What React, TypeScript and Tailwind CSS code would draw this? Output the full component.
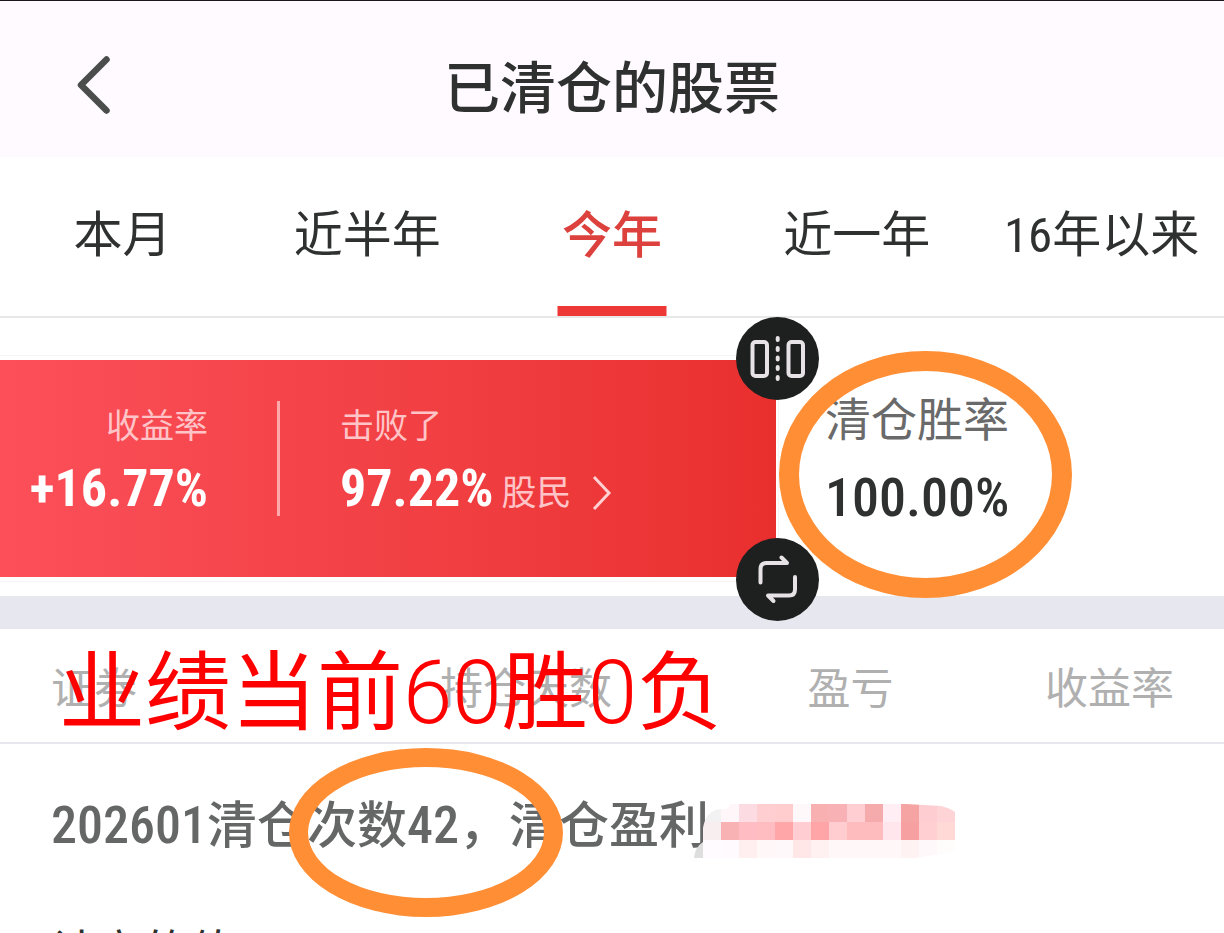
const periods = ['本月', '近半年', '今年', '近一年', '16年以来'];

const mosaicColors = [
  ['#f3f2f3', '#fff6f9', '#fddbe3', '#ffced1', '#ffcdce', '#fff8fa', '#f8b0b1', '#f8b1b4', '#ffced2', '#f5abab', '#ffeef3', '#f5a3a3', '#fecdd1', '#ffd4d6'],
  ['#f8eef0', '#f8b2b3', '#ffbcc2', '#ffbdc1', '#fea6a8', '#ffcdd2', '#ffa5a7', '#ffccd0', '#ffbcbe', '#ffbcbe', '#ffe6ec', '#f7a0a1', '#ffcfd2', '#fed9d6'],
  ['#fffbff', '#fffafd', '#ffefef', '#fff7f8', '#fff8fb', '#ffe7e8', '#fff0f2', '#fff7f8', '#fff7f8', '#fff7f8', '#fff7f8', '#fff2f3', '#fff8fa', '#fffcfc'],
];

function BackIcon() {
  return (
    <svg width="40" height="64" viewBox="0 0 40 64" fill="none" stroke="#4a4d4b" strokeWidth="6.500" strokeLinecap="round" strokeLinejoin="round" aria-hidden="true">
      <path d="M34.500 7.500 9 33l25.500 25.500" />
    </svg>
  );
}

function FlipIcon() {
  return (
    <svg width="83" height="83" viewBox="0 0 83 83" fill="none" stroke="#e6e2e5" strokeWidth="4" aria-hidden="true">
      <rect x="16.5" y="25" width="14.5" height="34" rx="3" />
      <rect x="52.5" y="25" width="14.5" height="34" rx="3" />
      <path d="M41.7 21v2M41.7 31v2M41.7 40.5v2M41.7 50v2M41.7 60v2" strokeLinecap="round" />
    </svg>
  );
}

function RotateIcon() {
  return (
    <svg width="83" height="83" viewBox="0 0 83 83" fill="none" stroke="#e6e2e5" strokeWidth="4" strokeLinecap="round" strokeLinejoin="round" aria-hidden="true">
      <path d="M24.5 44.500V31q0-6 6-6H51L45.500 19.500" />
      <path d="M59 39V51.500q0 6-6 6H32L37.500 63" />
    </svg>
  );
}

function Mosaic() {
  return (
    <svg className="-ml-[15px] mt-[11px] shrink-0" width="261" height="54" viewBox="0 0 261 54" aria-hidden="true">
      <defs>
        <clipPath id="smear">
          <path d="M9 54V38Q8 32 9 24 12 6 27 5 34 7 36 0H212L247 2Q256 4 261 8V47Q240 52 220 54Z" />
        </clipPath>
      </defs>
      <path d="M0 54Q1 43 9 38V54Z" fill="#dedede" />
      <g clipPath="url(#smear)" shapeRendering="crispEdges">
        {mosaicColors.map((row, y) =>
          row.map((color, x) => <rect key={`${x}-${y}`} x={9 + x * 18} y={y * 18} width="18" height="18" fill={color} />),
        )}
      </g>
    </svg>
  );
}

export default function App() {
  return (
    <div className="h-screen overflow-hidden bg-white font-['Roboto_Condensed','Noto_Sans_CJK_SC',sans-serif] text-[#2f3130]">
      <header className="relative flex h-[157px] items-center justify-center border-t border-[#1c161c] bg-[#fefaff] pb-3 pt-8">
        <button type="button" aria-label="返回" className="absolute left-[72px] top-[51px]">
          <BackIcon />
        </button>
        <h1 className="text-[56px] font-medium leading-none">已清仓的股票</h1>
      </header>

      <nav className="grid h-[161px] grid-cols-5 border-b-2 border-[#e8e8e9]">
        {periods.map((label) =>
          label === '今年' ? (
            <button key={label} type="button" aria-current="true" className="relative pb-[2px] text-[50px] font-medium leading-none text-[#dc413d]">
              {label}
              <span className="absolute bottom-0 left-1/2 h-[10px] w-[109px] -translate-x-1/2 bg-[#ee3835]" />
            </button>
          ) : (
            <button key={label} type="button" className="whitespace-nowrap pb-[2px] text-[49px] leading-none">
              {label}
            </button>
          ),
        )}
      </nav>

      <section className="flex h-[278px] pt-[37px]">
        <div className="relative h-[227px] w-[779px] shrink-0 border-y border-r border-[#f8f3f6] py-1 pr-[2px]">
          <a href="#rank" className="flex h-[217px] bg-linear-to-r from-[#fc4f59] via-[#f24145] to-[#e92f2e] text-white">
            <div className="flex w-[208px] flex-col items-end pt-[48px]">
              <span className="text-[34px] leading-[36px] text-[#ffc4c7]">收益率</span>
              <span className="mt-[14px] text-[52px] font-bold leading-[62px]">+16.77%</span>
            </div>
            <div className="ml-[69px] mt-[41px] h-[115px] w-[3px] bg-[#ffa9ac]" />
            <div className="ml-[60px] pt-[48px]">
              <div className="text-[34px] leading-[36px] text-[#ffc4c7]">击败了</div>
              <div className="mt-[14px] flex items-center text-[52px] font-bold leading-[62px]">
                97.22%
                <span className="ml-[8px] pt-[8px] text-[35px] font-normal leading-none text-[#ffc4c7]">股民</span>
                <svg className="ml-[21px] mt-[8px]" width="20" height="36" viewBox="0 0 20 36" fill="none" stroke="#ffd0d2" strokeWidth="3" aria-hidden="true">
                  <path d="m2 2 15 16L2 34" />
                </svg>
              </div>
            </div>
          </a>
          <button type="button" aria-label="镜像" className="absolute -right-[41px] -top-[39px] z-10 size-[83px] rounded-full bg-[#1e1f1f]">
            <FlipIcon />
          </button>
          <button type="button" aria-label="旋转" className="absolute -bottom-[40px] -right-[41px] z-10 size-[83px] rounded-full bg-[#1e1f1f]">
            <RotateIcon />
          </button>
        </div>
        <div className="relative pl-[46px] pt-[40px]">
          <div className="text-[46px] leading-[50px] text-[#6a6a6a]">清仓胜率</div>
          <div className="mt-[22px] text-[54px] font-medium leading-[62px]">100.00%</div>
          <div className="absolute left-0 -top-[4px] h-[247px] w-[293px] rounded-[50%] border-[20px] border-[#ff8e35]" />
        </div>
      </section>

      <div className="h-[33px] bg-[#e6e7ef]" />

      <main className="relative">
        <table className="w-full table-fixed border-collapse">
          <thead>
            <tr className="h-[114px] border-b-2 border-[#e7e7ed] text-[43px] leading-none text-[#b0b0b0]">
              <th scope="col" className="w-[27%] pb-0 pl-[51px] pt-2 text-left font-normal">证券</th>
              <th scope="col" className="w-[23%] pb-0 pt-2 text-right font-normal">持仓天数</th>
              <th scope="col" className="w-[23%] pb-0 pt-2 text-right font-normal">盈亏</th>
              <th scope="col" className="w-[27%] pb-0 pr-[50px] pt-2 text-right font-normal">收益率</th>
            </tr>
          </thead>
          <tbody>
            <tr>
              <td colSpan={4} className="h-[164px] pl-[51px]">
                <div className="flex items-center whitespace-nowrap text-[52px] font-medium leading-none text-[#656666]">
                  <span>
                    202601<span className="text-[50px]">清仓次数</span>42<span className="text-[50px]">，清仓盈利</span>
                  </span>
                  <Mosaic />
                </div>
              </td>
            </tr>
            <tr>
              <td colSpan={4} className="pl-[51px] pt-[22px] text-[46px] leading-none">计立的值</td>
            </tr>
          </tbody>
        </table>
        <p className="absolute left-[59px] top-[9px] whitespace-nowrap text-[86px] leading-[110px] text-[#ff0000]">
          业绩当前<span className="font-['Roboto'] text-[89px] font-light">60</span>胜<span className="font-['Roboto'] text-[89px] font-light">0</span>负
        </p>
        <div className="absolute left-[289px] top-[119px] h-[169px] w-[274px] rounded-[50%] border-[19px] border-[#ff8e35]" />
      </main>
    </div>
  );
}
